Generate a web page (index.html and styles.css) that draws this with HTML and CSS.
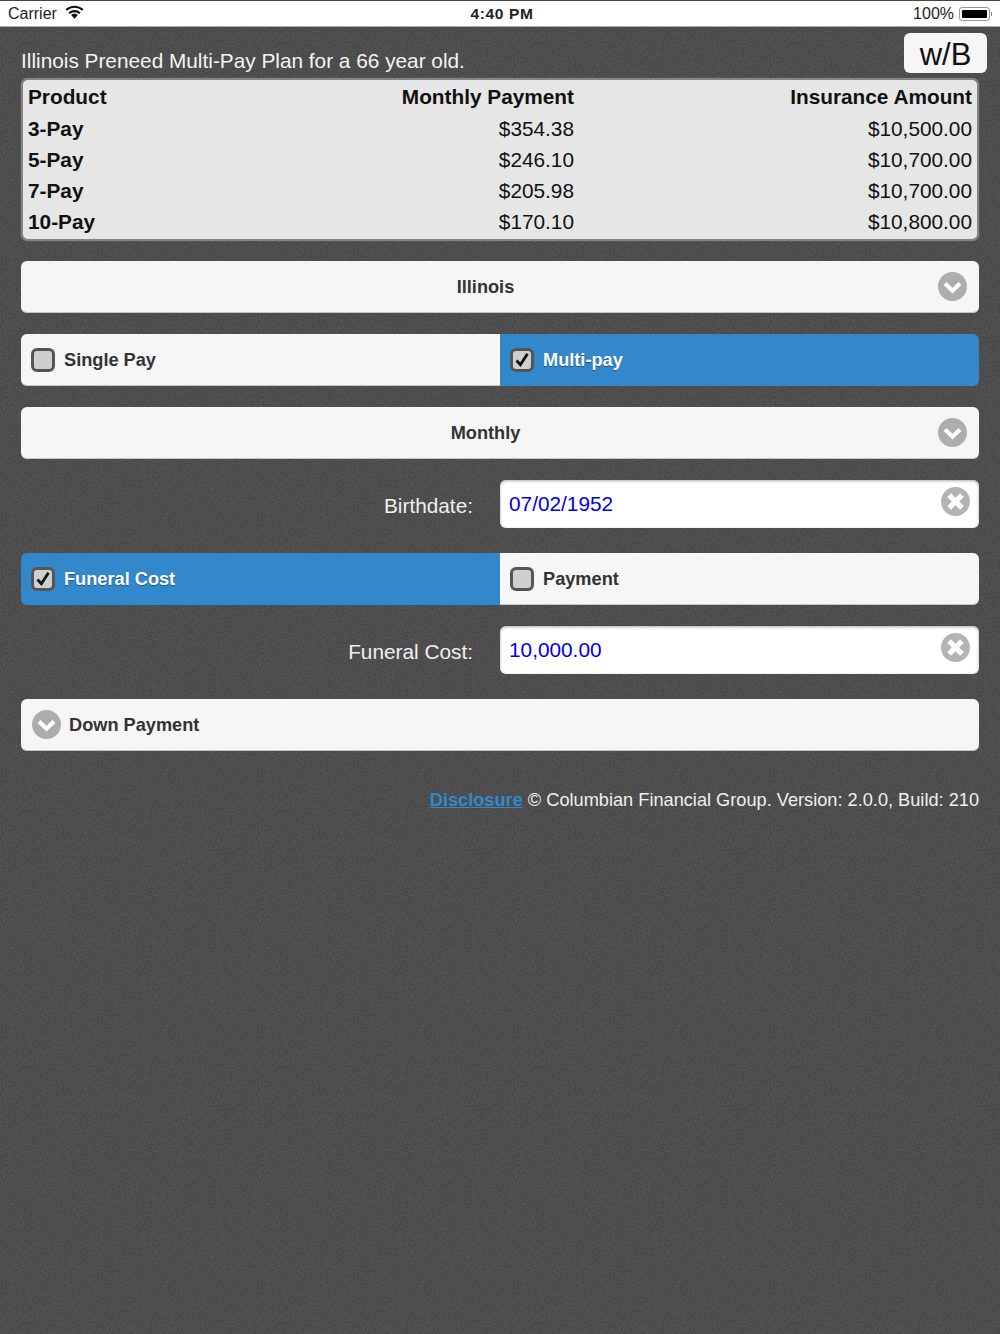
FILE: index.html
```html
<!DOCTYPE html>
<html lang="en">
<head>
    <meta charset="UTF-8">
    <meta name="viewport" content="width=device-width, initial-scale=1.0">
    <title>Illinois Preneed Multi-Pay Plan</title>
    <link rel="stylesheet" href="styles.css">
</head>
<body>
    <div class="status-bar">
        <div class="status-left">
            <span>Carrier</span>
            <svg class="wifi" width="19" height="14" viewBox="0 0 18 13">
                <path d="M9 13 L5.8 9.4 A4.8 4.8 0 0 1 12.2 9.4 Z" fill="#111"/>
                <path d="M3.9 7.6 A7.6 7.6 0 0 1 14.1 7.6" fill="none" stroke="#111" stroke-width="2"/>
                <path d="M1.1 4.6 A11.6 11.6 0 0 1 16.9 4.6" fill="none" stroke="#111" stroke-width="2"/>
            </svg>
        </div>
        <div class="status-time">4:40 PM</div>
        <div class="status-right">
            <span>100%</span>
            <div class="battery"><div class="battery-fill"></div></div>
            <div class="battery-tip"></div>
        </div>
    </div>

    <div class="content">
        <div class="plan-header">
            <div class="plan-title">Illinois Preneed Multi-Pay Plan for a 66 year old.</div>
            <button class="wb-button">w/B</button>
        </div>

        <div class="plan-table">
            <div class="plan-row plan-head">
                <div>Product</div>
                <div class="num">Monthly Payment</div>
                <div class="num">Insurance Amount</div>
            </div>
            <div class="plan-row">
                <div class="product">3-Pay</div>
                <div class="num">$354.38</div>
                <div class="num">$10,500.00</div>
            </div>
            <div class="plan-row">
                <div class="product">5-Pay</div>
                <div class="num">$246.10</div>
                <div class="num">$10,700.00</div>
            </div>
            <div class="plan-row">
                <div class="product">7-Pay</div>
                <div class="num">$205.98</div>
                <div class="num">$10,700.00</div>
            </div>
            <div class="plan-row">
                <div class="product">10-Pay</div>
                <div class="num">$170.10</div>
                <div class="num">$10,800.00</div>
            </div>
        </div>

        <div class="select-box first-select">
            <span class="box-text">Illinois</span>
            <svg class="round-icon select-icon" viewBox="0 0 28 28"><circle cx="14" cy="14" r="14" fill="#adadad"/><path d="M6.8 11 L14 18 L21.2 11" fill="none" stroke="#fff" stroke-width="4"/></svg>
        </div>

        <div class="toggle-group">
            <div class="toggle-option">
                <span class="checkbox"></span>
                <span class="box-text">Single Pay</span>
            </div>
            <div class="toggle-option active">
                <span class="checkbox">
                    <svg width="18" height="18" viewBox="0 0 18 18"><path d="M3.5 9.5 L7.4 13.8 L14.5 2.8" fill="none" stroke="#111" stroke-width="2.8"/></svg>
                </span>
                <span class="box-text">Multi-pay</span>
            </div>
        </div>

        <div class="select-box">
            <span class="box-text">Monthly</span>
            <svg class="round-icon select-icon" viewBox="0 0 28 28"><circle cx="14" cy="14" r="14" fill="#adadad"/><path d="M6.8 11 L14 18 L21.2 11" fill="none" stroke="#fff" stroke-width="4"/></svg>
        </div>

        <div class="field-row">
            <label class="field-label">Birthdate:</label>
            <div class="field-input">
                <span>07/02/1952</span>
                <svg class="round-icon clear-icon" viewBox="0 0 28 28"><circle cx="14" cy="14" r="14" fill="#b3b3b3"/><path d="M7.8 7.8 L20.2 20.2 M20.2 7.8 L7.8 20.2" fill="none" stroke="#fff" stroke-width="5"/></svg>
            </div>
        </div>

        <div class="toggle-group toggle-gap">
            <div class="toggle-option active">
                <span class="checkbox">
                    <svg width="18" height="18" viewBox="0 0 18 18"><path d="M3.5 9.5 L7.4 13.8 L14.5 2.8" fill="none" stroke="#111" stroke-width="2.8"/></svg>
                </span>
                <span class="box-text">Funeral Cost</span>
            </div>
            <div class="toggle-option">
                <span class="checkbox"></span>
                <span class="box-text">Payment</span>
            </div>
        </div>

        <div class="field-row">
            <label class="field-label">Funeral Cost:</label>
            <div class="field-input">
                <span>10,000.00</span>
                <svg class="round-icon clear-icon" viewBox="0 0 28 28"><circle cx="14" cy="14" r="14" fill="#b3b3b3"/><path d="M7.8 7.8 L20.2 20.2 M20.2 7.8 L7.8 20.2" fill="none" stroke="#fff" stroke-width="5"/></svg>
            </div>
        </div>

        <div class="collapsible">
            <svg class="round-icon" viewBox="0 0 28 28"><circle cx="14" cy="14" r="14" fill="#adadad"/><path d="M6.8 11 L14 18 L21.2 11" fill="none" stroke="#fff" stroke-width="4"/></svg>
            <span class="box-text">Down Payment</span>
        </div>

        <div class="footer-line">
            <a href="#">Disclosure</a> © Columbian Financial Group. Version: 2.0.0, Build: 210
        </div>
    </div>
</body>
</html>
```

FILE: styles.css
```css
* {
    box-sizing: border-box;
}
body {
    margin: 0;
    height: 1334px;
    overflow: hidden;
    font-family: "Liberation Sans", Arial, sans-serif;
    background-color: #525252;
    background-image: url("data:image/svg+xml,%3Csvg xmlns='http://www.w3.org/2000/svg' width='256' height='256'%3E%3Cfilter id='n'%3E%3CfeTurbulence type='fractalNoise' baseFrequency='0.55' numOctaves='2' stitchTiles='stitch'/%3E%3CfeColorMatrix values='0 0 0 0 0 0 0 0 0 0 0 0 0 0 0 0 0 0 1.5 -0.55'/%3E%3C/filter%3E%3Crect width='256' height='256' filter='url(%23n)' opacity='0.25'/%3E%3C/svg%3E");
}
.status-bar {
    display: flex;
    justify-content: space-between;
    align-items: center;
    height: 27px;
    padding: 0 8px;
    background: #fff;
    border-top: 1px solid #444;
    border-bottom: 1px solid #aaa;
    font-size: 16px;
    color: #222;
}
.status-left, .status-right {
    display: flex;
    align-items: center;
    flex: 1;
}
.status-right {
    justify-content: flex-end;
}
.wifi {
    margin-left: 8px;
    margin-top: -3px;
}
.status-time {
    font-size: 15.5px;
    font-weight: bold;
    letter-spacing: 0.6px;
    margin-left: 4px;
}
.battery {
    width: 31px;
    height: 14px;
    margin-left: 5px;
    padding: 2px;
    border: 1px solid #999;
    border-radius: 3px;
}
.battery-fill {
    height: 100%;
    background: #000;
    border-radius: 1px;
}
.battery-tip {
    width: 1px;
    height: 4px;
    margin-left: 1px;
    background: #888;
}
.content {
    padding: 6px 21px 0;
}
.plan-header {
    display: flex;
    justify-content: space-between;
    align-items: flex-end;
    height: 45px;
}
.plan-title {
    font-size: 20.8px;
    line-height: 26px;
    margin-bottom: 4px;
    color: #f4f4f4;
}
.wb-button {
    width: 83px;
    height: 40px;
    margin: 0 -8px 5px 0;
    padding: 3px 0 0;
    border: none;
    border-radius: 6px;
    background: #f6f6f6;
    color: #111;
    font-family: inherit;
    font-size: 31px;
    cursor: pointer;
}
.plan-table {
    height: 163px;
    padding: 1px 5px;
    background: #e6e6e6;
    border: 2px solid #858585;
    border-radius: 7px;
    box-shadow: 0 0 1px #999;
    font-size: 20.8px;
    color: #111;
}
.plan-row {
    display: grid;
    grid-template-columns: 226px 320px 398px;
    height: 31px;
    line-height: 31px;
}
.plan-head {
    height: 32px;
}
.plan-head, .product {
    font-weight: bold;
}
.num {
    text-align: right;
}
.select-box {
    display: flex;
    align-items: center;
    justify-content: center;
    position: relative;
    height: 52px;
    margin-top: 21px;
    padding-right: 29px;
    background: #f6f6f6;
    border-radius: 6px;
    border-bottom: 1px solid #c4c4c4;
    font-size: 18.2px;
    font-weight: bold;
    color: #333;
}
.first-select {
    margin-top: 20px;
}
.box-text {
    margin-top: 2px;
}
.round-icon {
    width: 29px;
    height: 29px;
    flex: none;
}
.select-icon {
    position: absolute;
    right: 12px;
    top: 11px;
}
.toggle-group {
    display: grid;
    grid-template-columns: 479px 479px;
    height: 52px;
    margin-top: 21px;
}
.toggle-gap {
    margin-top: 25px;
}
.toggle-option {
    display: flex;
    align-items: center;
    gap: 9px;
    padding-left: 10px;
    background: #f6f6f6;
    border-bottom: 1px solid #c4c4c4;
    font-size: 18.2px;
    font-weight: bold;
    color: #333;
}
.toggle-option:first-child {
    border-radius: 6px 0 0 6px;
}
.toggle-option:last-child {
    border-radius: 0 6px 6px 0;
}
.toggle-option.active {
    background: #3388cc;
    border-bottom-color: #3388cc;
    color: #fff;
    text-shadow: 0 1px 1px #14568c;
}
.checkbox {
    display: flex;
    align-items: center;
    justify-content: center;
    width: 24px;
    height: 24px;
    background: #cfcfcf;
    border: 3px solid #555;
    border-radius: 6px;
}
.field-row {
    display: grid;
    grid-template-columns: 452px 479px;
    gap: 27px;
    align-items: center;
    margin-top: 21px;
}
.field-label {
    padding-top: 4px;
    font-size: 20.8px;
    text-align: right;
    color: #f0f0f0;
}
.field-input {
    display: flex;
    align-items: center;
    justify-content: space-between;
    height: 48px;
    padding: 0 9px;
    background: #fff;
    border-radius: 6px;
    box-shadow: inset 0 1px 3px #aaa;
    font-size: 20.8px;
    color: #0000ee;
}
.clear-icon {
    margin-bottom: 5px;
}
.collapsible {
    display: flex;
    align-items: center;
    gap: 8px;
    height: 52px;
    margin-top: 25px;
    padding-left: 11px;
    background: #f6f6f6;
    border-radius: 6px;
    border-bottom: 1px solid #c4c4c4;
    font-size: 18.2px;
    font-weight: bold;
    color: #333;
}
.footer-line {
    margin-top: 38px;
    text-align: right;
    font-size: 18.2px;
    line-height: 22px;
    color: #f0f0f0;
}
.footer-line a {
    font-weight: bold;
    color: #3388cc;
}
```
